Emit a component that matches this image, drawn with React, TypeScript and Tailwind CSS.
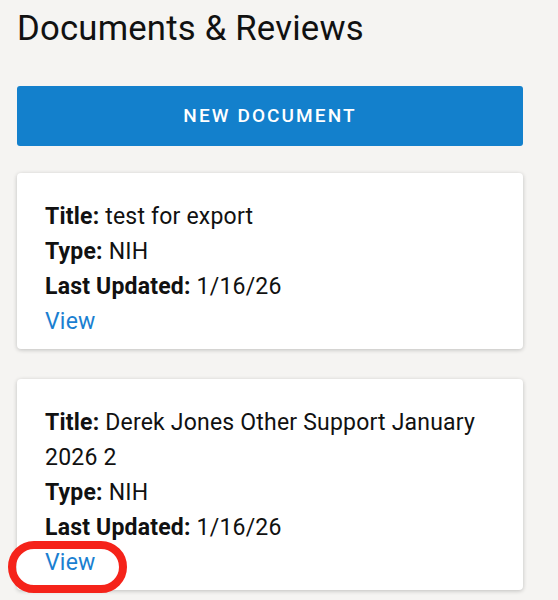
import React from 'react';

interface DocumentItem {
  id: number;
  title: string;
  type: string;
  lastUpdated: string;
}

const documents: DocumentItem[] = [
  { id: 1, title: 'test for export', type: 'NIH', lastUpdated: '1/16/26' },
  { id: 2, title: 'Derek Jones Other Support January 2026 2', type: 'NIH', lastUpdated: '1/16/26' },
];

function DocumentCard({ doc, highlight }: { doc: DocumentItem; highlight?: boolean }) {
  return (
    <div className="rounded-[4px] bg-white pl-[28px] pr-[24px] pt-[26px] pb-[10px] shadow-[0_1px_4px_rgba(0,0,0,0.22)]">
      <p className="leading-[35px]">
        <span className="font-bold">Title:</span> {doc.title}
      </p>
      <p className="leading-[35px]">
        <span className="font-bold">Type:</span> {doc.type}
      </p>
      <p className="leading-[35px]">
        <span className="font-bold">Last Updated:</span> {doc.lastUpdated}
      </p>
      <div className="relative w-fit">
        <a href="#" className="block leading-[35px] text-[#1b7fd1]">
          View
        </a>
        {/* annotation ring from the screenshot */}
        {highlight && (
          <div className="pointer-events-none absolute left-[-37px] top-[-4px] h-[52px] w-[119px] rounded-full border-[8px] border-[#f5231a]" />
        )}
      </div>
    </div>
  );
}

export default function App() {
  return (
    <div className="min-h-[600px] overflow-hidden bg-[#f5f4f2] px-[17px] pt-[6px] font-['Roboto',sans-serif] text-[#111]">
      <h1 className="pr-[18px] text-[34.7px] leading-[44px] font-normal tracking-[0.2px]">Documents &amp; Reviews</h1>

      <div className="mr-[18px] mt-[36px] space-y-[27px]">
        <button className="flex h-[60px] w-full items-center justify-center rounded-[3px] bg-[#1380cc] text-[19px] font-medium tracking-[2.1px] text-white">
          NEW DOCUMENT
        </button>

        <div className="space-y-[30px] text-[23px] tracking-[0.2px]">
          {documents.map((doc, i) => (
            <DocumentCard key={doc.id} doc={doc} highlight={i === 1} />
          ))}
        </div>
      </div>
    </div>
  );
}
